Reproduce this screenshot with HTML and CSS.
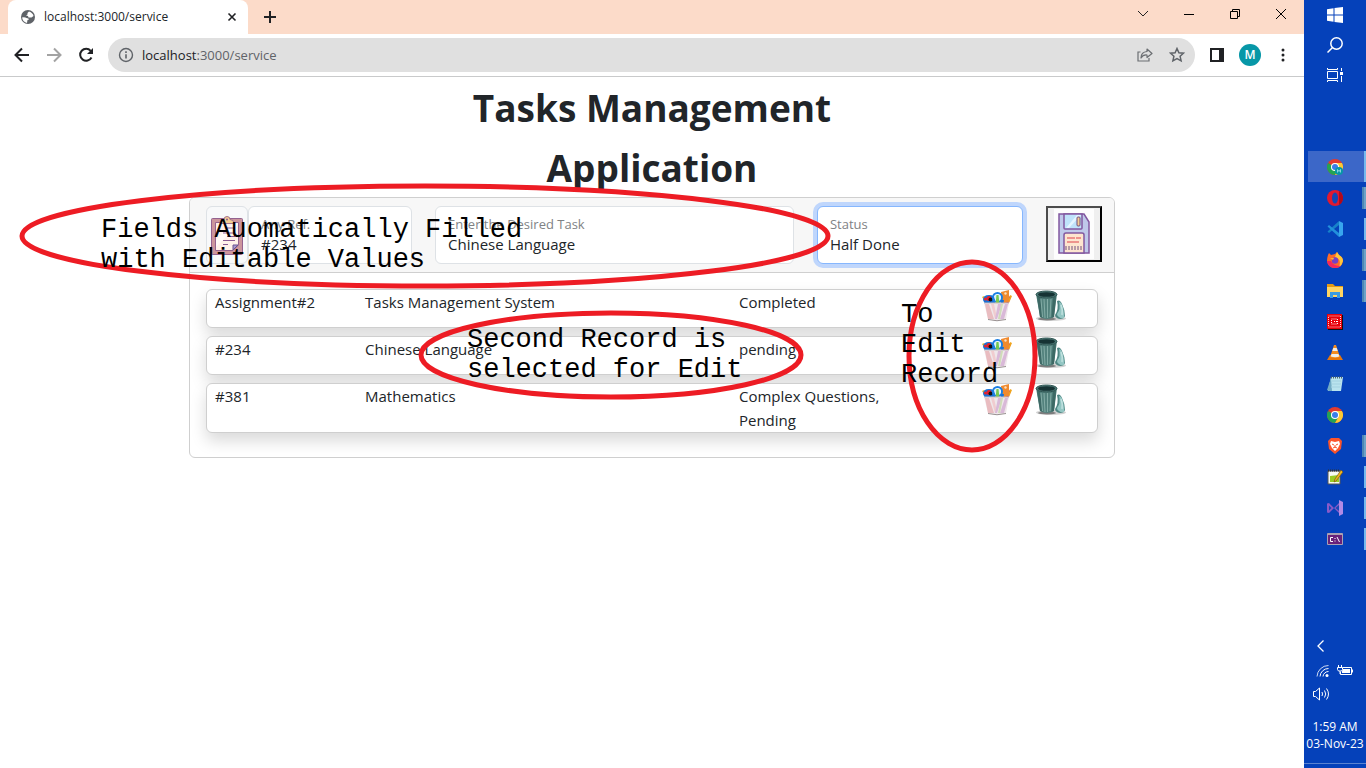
FILE: index.html
```html
<!DOCTYPE html>
<html lang="en">
<head>
<meta charset="utf-8">
<title>localhost:3000/service</title>
<link rel="stylesheet" href="styles.css">
</head>
<body>
<svg class="sprite" aria-hidden="true">
  <symbol id="supplies" viewBox="0 0 30 32">
    <path d="M0 7l5 8 3-1-6-8z" fill="#f0b429"/>
    <path d="M26 6l3 1-4 10-3-2z" fill="#b01e82"/><path d="M28 5l2 1-3 7-1-1z" fill="#f0a41c"/>
    <path d="M19 2l8-2v12l-7 2z" fill="#f08a2e"/><circle cx="23.500" cy="3.500" r="1.200" fill="#fbe0c0"/>
    <path d="M1 10q0-5 6-5t6 5v4H3z" fill="#1673d8"/><circle cx="7" cy="8.500" r="2.500" fill="#e9202b"/><circle cx="8.500" cy="9.500" r="2" fill="#111"/>
    <circle cx="3.500" cy="9" r="1.500" fill="#e9202b"/>
    <circle cx="15.500" cy="7.500" r="4.500" fill="none" stroke="#1b7fe4" stroke-width="2"/><circle cx="15.500" cy="7.500" r="3" fill="#d8f1fb"/>
    <path d="M14.500 5h2l1 9h-4z" fill="#77c94f"/><path d="M19 10h3l-1 5h-3z" fill="#1673d8"/>
    <path d="M2 13h25l-3 16q-9 3-18 0z" fill="#efe7ea"/>
    <path d="M3 14l4 0 5 15H6z" fill="#e9bcc0"/><path d="M9 14h3l3 14-2 1z" fill="#f0cccf"/>
    <path d="M20 14l-5 15h-2l3-15zM26 14l-4 15h-4l5-15z" fill="#d9b9d8"/>
    <path d="M19 14h2l-3 15h-2z" fill="#cfdcb8"/>
    <path d="M2 13h25" stroke="#c5b9bd" fill="none"/><path d="M6 29.500q9 2.500 18 0" stroke="#989090" fill="none"/>
  </symbol>
  <symbol id="bin" viewBox="0 0 32 32">
    <ellipse cx="16" cy="28.500" rx="15" ry="2.500" fill="#000" opacity=".18"/>
    <ellipse cx="12" cy="29" rx="9" ry="1.500" fill="#000" opacity=".4"/>
    <path d="M1 4h21l-3 23q-7 4-14 0z" fill="#53827d"/>
    <path d="M2 7h3l2.500 21-2.500-1zM18 7h3l-2 20-2.500 1z" fill="#3d6965"/>
    <path d="M6 9l1.500 18M9 9l1 19M12.500 9v19M16 9l-1 18" stroke="#83aca6" stroke-width="1"/>
    <ellipse cx="11.500" cy="4.500" rx="10.500" ry="3.500" fill="#4c7976" stroke="#315654"/>
    <ellipse cx="11.500" cy="4.500" rx="8.500" ry="2.300" fill="#163334"/>
    <path d="M22 11q3-2 5 3 3 6 3 12-1 3-5 3-5-1-5-4 4-6 2-14z" fill="#4f8784"/>
    <path d="M24 12q3 0 4.500 8 1 5 .5 8-3 1-5-1-2-1-2-3 4-5 2-12z" fill="#93c6c3"/>
    <path d="M26 15q2 5 1 10" stroke="#c2e2e0" stroke-width="1.500" fill="none"/>
  </symbol>
  <symbol id="chrome" viewBox="0 0 16 16">
    <circle cx="8" cy="8" r="8" fill="#e33b2e"/>
    <path d="M1.070 4A8 8 0 0 0 8 16l3.500-6L8 8z" fill="#23a455"/>
    <path d="M14.930 4A8 8 0 0 1 8 16l3.500-6L8 4z" fill="#fcc934"/>
    <circle cx="8" cy="8" r="4" fill="#fff"/><circle cx="8" cy="8" r="3" fill="#3a7ee8"/>
  </symbol>
</svg>

<div class="desktop">
  <div class="browser">
    <header>
      <div class="tabs">
        <div class="tab">
          <svg width="14" height="14" viewBox="0 0 14 14"><circle cx="7" cy="7" r="7" fill="#5f6368"/><path d="M1 7.500q3-.5 4.500.5 2.500 0 2.500 1.500L6.500 10l-.5 3Q2 12 1 7.500zM8 1.500L6.500 3v1.500L5 5.500l2 .5.500 1.500h3L12.500 6Q12 3 8 1.500z" fill="#fff"/></svg>
          <span class="tab-title">localhost:3000/service</span>
          <button class="plain" aria-label="Close tab"><svg width="10" height="10" viewBox="0 0 10 10"><path d="M1.500 1.500l7 7m0-7l-7 7" stroke="#202124" stroke-width="1.600"/></svg></button>
        </div>
        <button class="plain new-tab" aria-label="New tab"><svg width="12" height="12" viewBox="0 0 12 12"><path d="M6 0v12M0 6h12" stroke="#202124" stroke-width="2"/></svg></button>
        <div class="window-buttons">
          <button class="plain" aria-label="Search tabs"><svg width="12" height="12" viewBox="0 0 12 12"><path d="M1 3l5 5 5-5" stroke="#222" fill="none"/></svg></button>
          <button class="plain" aria-label="Minimize"><svg width="12" height="12" viewBox="0 0 12 12"><path d="M1 6.500h10" stroke="#000"/></svg></button>
          <button class="plain" aria-label="Restore"><svg width="12" height="12" viewBox="0 0 12 12"><path d="M1.500 3.500h7v7h-7zM3.500 3V1.500h7v7H9" stroke="#000" fill="none"/></svg></button>
          <button class="plain" aria-label="Close"><svg width="12" height="12" viewBox="0 0 12 12"><path d="M1 1l10 10M11 1L1 11" stroke="#000"/></svg></button>
        </div>
      </div>
      <div class="toolbar">
        <button class="plain" aria-label="Back"><svg width="16" height="16" viewBox="0 0 16 16"><path d="M15 8H2M8 1.500L1.500 8 8 14.500" fill="none" stroke="#202124" stroke-width="2"/></svg></button>
        <button class="plain" aria-label="Forward"><svg width="16" height="16" viewBox="0 0 16 16"><path d="M1 8h13M8 1.500L14.500 8 8 14.500" fill="none" stroke="#a3a3a3" stroke-width="2"/></svg></button>
        <button class="plain" aria-label="Reload"><svg width="16" height="16" viewBox="0 0 16 16"><path d="M13.500 10.500a6 6 0 1 1-.8-6.700" fill="none" stroke="#202124" stroke-width="2"/><path d="M15 1v6H9z" fill="#202124"/></svg></button>
        <div class="address">
          <svg width="16" height="16" viewBox="0 0 16 16"><circle cx="8" cy="8" r="6.500" fill="none" stroke="#5f6368" stroke-width="1.400"/><path d="M8 7.200V11.500M8 4.300V6" stroke="#5f6368" stroke-width="1.600"/></svg>
          <span class="url">localhost<span class="path">:3000/service</span></span>
          <button class="plain" aria-label="Share"><svg width="16" height="16" viewBox="0 0 16 16"><path d="M3.500 5H1v9h11v-3" fill="none" stroke="#6b6e72" stroke-width="1.200"/><path d="M10 2l5 4.500-5 4V8Q6 7.500 4 11q0-6 6-6.500z" fill="none" stroke="#6b6e72" stroke-width="1.200" stroke-linejoin="round"/></svg></button>
          <button class="plain" aria-label="Bookmark"><svg width="16" height="16" viewBox="0 0 16 16"><path d="M8 1.500l1.900 4.200 4.600.5-3.400 3.100 1 4.500L8 11.500l-4.100 2.300 1-4.500-3.400-3.100 4.600-.5z" fill="none" stroke="#5f6368" stroke-width="1.500"/></svg></button>
        </div>
        <button class="plain" aria-label="Side panel"><svg width="16" height="16" viewBox="0 0 16 16"><path d="M1 1h14v14H1z" fill="#202124"/><path d="M3 3h7v10H3z" fill="#fff"/></svg></button>
        <button class="plain profile">M</button>
        <button class="plain" aria-label="Menu"><svg width="16" height="16" viewBox="0 0 16 16" fill="#202124"><circle cx="8" cy="3" r="1.500"/><circle cx="8" cy="8" r="1.500"/><circle cx="8" cy="13" r="1.500"/></svg></button>
      </div>
    </header>

    <main>
      <h1>Tasks Management Application</h1>
      <section class="card">
        <form class="card-head">
          <div class="group">
            <span class="addon">
              <svg width="32" height="39" viewBox="0 0 32 39">
                <rect x=".5" y="2.500" width="31" height="36" rx="1" fill="#cc959d" stroke="#94628f"/>
                <path d="M4.500 6.500h23V29l-5.500 5.500H4.500z" fill="#fff1ea" stroke="#94628f"/><path d="M5 24L22 7h5v2L5 31z" fill="#fffaf7"/>
                <path d="M27 29h-5v5z" fill="#a89bd0" stroke="#69508f"/>
                <path d="M16 12h8M12 17h12M16 20.500h8M12 24.500h12M12 28.500h5" stroke="#8a5a92"/>
                <path d="M9 7.500q0-4 4-4 0-3 3-3t3 3q4 0 4 4z" fill="#f5cf94" stroke="#a3718b"/><circle cx="16" cy="3.500" r="1" fill="#8a5a92"/>
              </svg>
            </span>
            <div class="field"><label for="ref">Any Ref.</label><input id="ref" type="text" value="#234"></div>
          </div>
          <div class="field"><label for="task">Enter the Desired Task</label><input id="task" type="text" value="Chinese Language"></div>
          <div class="field active"><label for="status">Status</label><input id="status" type="text" value="Half Done"></div>
          <button class="save" type="button" aria-label="Save">
            <svg width="40" height="50" viewBox="0 0 40 50">
              <rect width="40" height="50" fill="#fdfdfd"/>
              <path d="M5 5h25l5 8v31H5z" fill="#bfc9ea" stroke="#8258a0" stroke-width="1.500"/>
              <path d="M10 5h18v14q0 1-1 1H11q-1 0-1-1z" fill="#bfe3fa" stroke="#8258a0" stroke-width="1.500"/>
              <path d="M12 19L23 6h4L15 19z" fill="#e4f5ff"/>
              <rect x="23" y="8" width="3" height="9" rx="1" fill="#f5cf94" stroke="#73507f"/>
              <path d="M10 44V26q0-2 2-2h16q2 0 2 2v18z" fill="#fde5cf" stroke="#8258a0" stroke-width="1.500"/>
              <path d="M13 29h8m1 0h5M13 33h12" stroke="#e87878" stroke-width="1.500"/>
              <path d="M12 37v4m3-4v4m3-4v4m3-4v4m3-4v4m3-4v4" stroke="#73507f"/>
            </svg>
          </button>
        </form>
        <table class="tasks">
          <tbody>
            <tr><td>Assignment#2</td><td>Tasks Management System</td><td class="state">Completed</td>
              <td><button class="plain" aria-label="Edit"><svg width="30" height="32"><use href="#supplies"/></svg></button></td>
              <td><button class="plain" aria-label="Delete"><svg width="32" height="32"><use href="#bin"/></svg></button></td></tr>
            <tr><td>#234</td><td>Chinese Language</td><td class="state">pending</td>
              <td><button class="plain" aria-label="Edit"><svg width="30" height="32"><use href="#supplies"/></svg></button></td>
              <td><button class="plain" aria-label="Delete"><svg width="32" height="32"><use href="#bin"/></svg></button></td></tr>
            <tr><td>#381</td><td>Mathematics</td><td class="state">Complex Questions, Pending</td>
              <td><button class="plain" aria-label="Edit"><svg width="30" height="32"><use href="#supplies"/></svg></button></td>
              <td><button class="plain" aria-label="Delete"><svg width="32" height="32"><use href="#bin"/></svg></button></td></tr>
          </tbody>
        </table>
      </section>
    </main>
  </div>

  <aside class="taskbar">
    <div class="system">
      <button class="plain" aria-label="Start"><svg width="16" height="16" viewBox="0 0 16 16" fill="#fff"><path d="M0 2.200L6.500 1.300v6.200H0zM7.500 1.100L16 0v7.500H7.500zM0 8.500h6.500v6.200L0 13.800zM7.500 8.500H16V16l-8.500-1.100z"/></svg></button>
      <button class="plain" aria-label="Search"><svg width="16" height="16" viewBox="0 0 16 16" fill="none" stroke="#fff" stroke-width="1.500"><circle cx="9.500" cy="6.500" r="5.700"/><path d="M5.500 10.500L.5 15.500"/></svg></button>
      <button class="plain" aria-label="Task view"><svg width="16" height="16" viewBox="0 0 16 16" fill="none" stroke="#fff"><path d="M.5 1v1.500h10V1M.5 4.500h10v7H.5zM.5 15v-1.500h10V15M14.500 1v3M14.500 9v6"/><path d="M13 5h3v3h-3z" fill="#fff" stroke="none"/></svg></button>
    </div>
    <div class="apps">
      <button class="app current one" aria-label="Chrome"><svg width="16" height="16" viewBox="0 0 16 16"><use href="#chrome"/><circle cx="12" cy="12" r="4" fill="#0797a7"/><path d="M10.500 13.500v-3l1.500 2 1.500-2v3" fill="none" stroke="#8bd5dc"/></svg></button>
      <button class="app many" aria-label="Opera"><svg width="16" height="16" viewBox="0 0 16 16"><ellipse cx="8" cy="8" rx="8" ry="8" fill="#e0192f"/><path d="M12 1a8 8 0 0 1 0 14z" fill="#b00a1c"/><ellipse cx="8" cy="8" rx="3" ry="5.500" fill="#1247b5"/></svg></button>
      <button class="app one" aria-label="Code"><svg width="16" height="16" viewBox="0 0 16 16"><path d="M12 0l4 2v12l-4 2z" fill="#38a5ee"/><path d="M12 0v4L2 12 .5 10.500z" fill="#1782c9"/><path d="M12 16v-4L2 4 .5 5.500z" fill="#2290dc"/></svg></button>
      <button class="app many" aria-label="Firefox"><svg width="16" height="16" viewBox="0 0 16 16"><path d="M1 3l1-2 2 2 4-1L10 0l2 3q4 2 4 6-1 7-8 7T0 9q0-3 1-6z" fill="#ff6b26"/><path d="M10 0l2 3q4 2 4 6-1 4-4 6 3-8-4-10z" fill="#ffc73a"/><path d="M0 9q1 7 8 7 4 0 6-2-8 0-10-5z" fill="#f5265f"/><circle cx="8" cy="8.500" r="3.200" fill="#7540c6"/><path d="M3 6l4 0-1 2" fill="#ffb12c"/></svg></button>
      <button class="app many" aria-label="Files"><svg width="16" height="16" viewBox="0 0 16 16"><path d="M0 1h6l2 2h8v2H0z" fill="#e59b14"/><path d="M0 4h16v10H0z" fill="#ffd564"/><path d="M3 15V9h10v6h-3v-3H6v3z" fill="#3a9ce2"/></svg></button>
      <button class="app" aria-label="Board"><svg width="16" height="16" viewBox="0 0 16 16"><path d="M1 1h15v15H1z" fill="#111"/><path d="M0 0h15v15H0z" fill="#e8000b"/><path d="M1.500 2h12v11h-12z" fill="none" stroke="#ffd5d5" stroke-dasharray="1 1"/><path d="M4.500 5h6v5h-6zM7 7.500h3" fill="none" stroke="#fff" stroke-dasharray="1 1"/></svg></button>
      <button class="app" aria-label="VLC"><svg width="16" height="16" viewBox="0 0 16 16"><path d="M3 10h10l3 5H0z" fill="#e8760c"/><path d="M7 0h2l4 12q-5 2-10 0z" fill="#f48b20"/><path d="M6.300 3h3.400l1 3H5.300zM4.500 9h7l.8 2.500q-4 1.500-8.500 0z" fill="#eee"/></svg></button>
      <button class="app" aria-label="Notepad"><svg width="16" height="16" viewBox="0 0 16 16"><path d="M4 1h12l-2 14H1z" fill="#b9e3ee"/><path d="M4 2L0 14l2 1h3z" fill="#72abc5"/><path d="M5 5h9M5 8h9M4 11h9" stroke="#a3d1e0"/><path d="M4 1.500h12" stroke="#52666b" stroke-dasharray="1 1" stroke-width="2"/></svg></button>
      <button class="app" aria-label="Chrome profile"><svg width="16" height="16"><use href="#chrome"/></svg></button>
      <button class="app many" aria-label="Brave"><svg width="16" height="16" viewBox="0 0 16 16"><path d="M4 0h8l3 3-1 8-6 5-6-5-1-8z" fill="#fb542b"/><path d="M4 3l4 1 4-1 1 3-2 4-3 3-3-3-2-4z" fill="#fff"/><path d="M5 6l2 1m4-1L9 7M8 7v3M6 10l2-1 2 1" stroke="#fb542b" fill="none"/></svg></button>
      <button class="app one" aria-label="Notes"><svg width="16" height="16" viewBox="0 0 16 16"><path d="M1 2h12v13H1z" fill="#f7faf2" stroke="#555"/><path d="M3 7l9-1v7H3z" fill="#9acb24"/><path d="M1 1.500h12" stroke="#333" stroke-width="2" stroke-dasharray="1 1"/><path d="M14 1l2 2-7 9-2 1 1-3z" fill="#f0b51c" stroke="#6b4a14" stroke-width=".6"/></svg></button>
      <button class="app one" aria-label="Visual Studio"><svg width="16" height="16" viewBox="0 0 16 16"><path d="M0 3.500L2 3l10 10V3L2 13l-2-.5z" fill="#8a5ac8"/><path d="M12 0l4 2v12l-4 2z" fill="#b18ae6"/><path d="M2 5.500v5L4.500 8zM12 5v6L8.500 8z" fill="#164ab6"/></svg></button>
      <button class="app one" aria-label="Console"><svg width="16" height="12" viewBox="0 0 16 12"><path d="M.5.500h15v11H.5z" fill="#68217a" stroke="#aaa0b2"/><path d="M1 1.500h14" stroke="#aaa0b2"/><path d="M6 4.500H3.500v4H6M8 5v1M8 7.500v1M10 4l2.500 5" fill="none" stroke="#fff"/></svg></button>
    </div>
    <div class="tray">
      <button class="plain" aria-label="Show hidden icons"><svg width="12" height="14" viewBox="0 0 12 14"><path d="M8.500 1.500L3 7l5.500 5.500" fill="none" stroke="#fff" stroke-width="1.300"/></svg></button>
      <div class="tray-row">
        <svg width="14" height="14" viewBox="0 0 14 14" fill="none" stroke="#fff"><path d="M1 12.500A11.500 11.500 0 0 1 12.500 1.500" opacity=".8"/><path d="M4 12.500A8.500 8.500 0 0 1 12.500 4.500M7 12.500A5.500 5.500 0 0 1 12.500 7.500"/><circle cx="11" cy="11.500" r="1.500" fill="#fff" stroke="none"/></svg>
        <svg width="16" height="14" viewBox="0 0 16 14" fill="none" stroke="#fff"><path d="M5.500 3.500h9v7h-11V8M15.500 5.500v3M1.500 1v2M4.500 1v2M.5 3.500h5v2l-1 1.500h-3L.5 5.500zM3 7v3"/><path d="M6 5h7v4H5V7z" fill="#fff" stroke="none"/></svg>
      </div>
      <svg class="sound" width="17" height="14" viewBox="0 0 17 14" fill="none" stroke="#fff"><path d="M.5 4.500h2L6.500 1v12l-4-3.500h-2zM9 5q1 2 0 4M11.500 3.500q2.500 3.500 0 7M13.500 1.500q4 5.500 0 11"/></svg>
      <time>1:59 AM<br>03-Nov-23</time>
    </div>
  </aside>

  <div class="markup">
    <svg width="1100" height="480" fill="none" stroke="#ed1c24" stroke-width="5"><ellipse cx="425" cy="236" rx="403" ry="50"/><ellipse cx="611" cy="355" rx="190" ry="42"/><ellipse cx="972" cy="356" rx="63" ry="94"/></svg>
    <p class="note note-fields">Fields Auomatically Filled<br>with Editable Values</p>
    <p class="note note-record">Second Record is<br>selected for Edit</p>
    <p class="note note-edit">To<br>Edit<br>Record</p>
  </div>
</div>
</body>
</html>
```
FILE: styles.css
```css
* { box-sizing: border-box; }
body { margin: 0; font: 15px/24px "Open Sans", "Noto Sans", sans-serif; color: #212529; background: #fff; }
svg { display: block; flex: none; }
.sprite { position: absolute; width: 0; height: 0; }
.plain { display: flex; align-items: center; justify-content: center; padding: 0; border: 0; background: none; font: inherit; }

.desktop { position: relative; display: flex; min-height: 100vh; }
.browser { flex: 1; min-width: 0; }

.tabs { display: flex; height: 34px; padding-left: 8px; background: #fcdbc9; }
.tab { display: flex; align-items: center; gap: 9px; width: 240px; padding: 0 11px 0 13px; background: #fff; border-radius: 8px 8px 0 0; }
.tab-title { flex: 1; font-size: 12px; }
.new-tab { width: 44px; }
.window-buttons { display: flex; margin-left: auto; height: 28px; }
.window-buttons .plain { width: 46px; }

.toolbar { display: flex; align-items: center; gap: 16px; height: 43px; padding: 0 13px 0 14px; border-bottom: 1px solid #c9cacb; }
.address { display: flex; flex: 1; align-items: center; gap: 16px; height: 34px; margin: 0 -2px; padding: 0 10px; border-radius: 17px; background: #e0e0e0; }
.url { flex: 1; margin-left: -8px; font-size: 13px; color: #202124; }
.path { color: #5f6368; }
.profile { width: 22px; height: 22px; margin: 0 -2px; border-radius: 50%; background: #0797a7; color: #fff; font-size: 12px; font-weight: 600; }

h1 { max-width: 400px; margin: 0 auto; padding-top: 1px; margin-bottom: -1px; font-size: 37px; line-height: 60px; font-weight: 700; text-align: center; }
.card { width: 71%; margin: 0 auto; border: 1px solid #cfcfcf; border-radius: 6px; }
.card-head { display: grid; grid-template-columns: 206fr 359fr 206fr 56px; gap: 23px; padding: 8px 12px 8px 16px; border-bottom: 1px solid #cfcfcf; border-radius: 5px 5px 0 0; background: #f7f7f7; }
.group { display: flex; min-width: 0; }
.group .field { flex: 1; }
.addon { display: flex; align-items: center; padding: 0 4px; border: 1px solid #dee2e6; border-radius: 6px; background: #f8f9fa; }
.field { min-width: 0; padding: 9px 12px; border: 1px solid #dee2e6; border-radius: 6px; background: #fff; }
.field label { display: block; font-size: 13px; line-height: 16px; color: #7f8285; }
.field input { display: block; width: 100%; height: 20px; margin-top: 2px; padding: 0; border: 0; outline: 0; background: none; color: #212529; font: inherit; line-height: 20px; }
.field.active { border-color: #86b7fe; box-shadow: 0 0 0 4px #bfd6fc; }
.save { display: flex; align-items: center; justify-content: center; height: 56px; padding: 0; border: 2px solid; border-color: #4c4c4c #000 #000 #4c4c4c; background: #efefef; }

.tasks, .tasks tbody { display: flex; flex-direction: column; gap: 8px; }
.tasks { padding: 16px 16px 24px; }
.tasks tr { display: grid; grid-template-columns: 150fr 374fr 243fr 53fr 62fr; min-height: 39px; padding-left: 8px; border: 1px solid #cfcfcf; border-radius: 6px; background: #fff; box-shadow: 0 8px 16px rgba(0, 0, 0, .15); }
.tasks td { padding: 0; min-width: 0; }
.tasks .state { padding-right: 56px; }

.taskbar { display: flex; flex-direction: column; flex: none; width: 62px; background: #0541ba; color: #fff; }
.system .plain { width: 100%; height: 30px; }
.apps { margin-top: 61px; padding-left: 4px; }
.app { display: flex; align-items: center; justify-content: center; width: 100%; height: 31px; padding: 0 5px 0 0; border: 0; background: none; background-repeat: no-repeat; background-position: right center; background-size: 2px 22px; }
.app.one { background-image: linear-gradient(#76b9ed, #76b9ed); }
.app.many { background-image: linear-gradient(90deg, #4d86b4 50%, #6ba3c8 50%); background-size: 4px 22px; }
.app.current { background-color: #3c67c8; background-size: 2px 100%; }
.tray { margin-top: auto; font-size: 12px; line-height: 17px; }
.tray > .plain { width: 34px; height: 26px; }
.tray-row { display: flex; justify-content: space-between; padding: 5px 13px 5px 12px; }
.sound { margin: 4px 0 17px 9px; }
.tray time { display: block; padding-bottom: 11px; border-bottom: 1px solid #5b83d1; margin-bottom: 4px; text-align: center; white-space: nowrap; }

.markup { position: absolute; top: 0; left: 0; pointer-events: none; }
.note { position: absolute; margin: 0; color: #000; font: 27px/30px "Liberation Mono", monospace; white-space: nowrap; }
.note-fields { left: 101px; top: 215px; }
.note-record { left: 467px; top: 325px; }
.note-edit { left: 901px; top: 300px; }
```
